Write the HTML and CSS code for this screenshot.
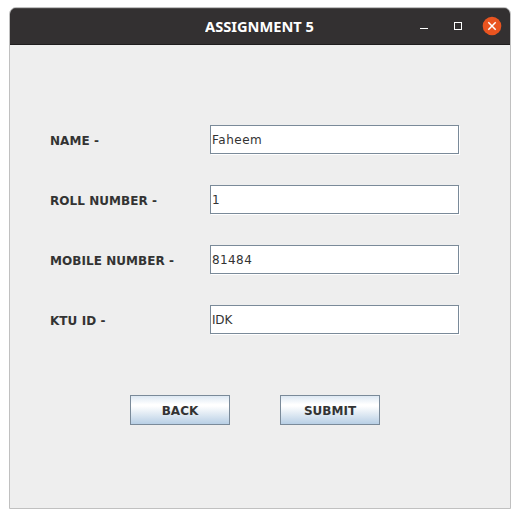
FILE: index.html
```html
<!DOCTYPE html>
<html lang="en">
<head>
<meta charset="utf-8">
<title>ASSIGNMENT 5</title>
<link rel="stylesheet" href="styles.css">
</head>
<body>
<main class="window">
  <header class="titlebar">
    <h1 class="title"><svg class="title-art" width="110" height="20"><text x="0" y="15" textLength="109" lengthAdjust="spacingAndGlyphs">ASSIGNMENT 5</text></svg></h1>
    <div class="controls">
      <svg width="90" height="36" viewBox="0 0 90 36">
        <path d="M0 20.5h8" stroke="#fff"/>
        <rect x="34.5" y="14.5" width="7" height="7" fill="none" stroke="#fff"/>
        <circle cx="72" cy="18" r="9.3" fill="#e95420"/>
        <path d="M68.3 14.3l7.4 7.4M75.7 14.3l-7.4 7.4" stroke="#fff" stroke-width="1.5"/>
      </svg>
    </div>
  </header>
  <form class="form">
    <label class="row"><span class="label">NAME -</span><input class="field" type="text" value="Faheem"></label>
    <label class="row"><span class="label">ROLL NUMBER -</span><input class="field" type="text" value="1"></label>
    <label class="row"><span class="label">MOBILE NUMBER -</span><input class="field number" type="text" value="81484"></label>
    <label class="row"><span class="label">KTU ID -</span><input class="field code" type="text" value="IDK"></label>
    <div class="actions">
      <button class="button" type="button">BACK</button>
      <button class="button" type="button">SUBMIT</button>
    </div>
  </form>
</main>
</body>
</html>
```
FILE: styles.css
```css
* { box-sizing: border-box; }
body {
  margin: 0;
  padding: 7px 9px;
  background: #fff;
  font-family: "DejaVu Sans", sans-serif;
  color: #333;
}
.window {
  width: 502px;
  height: 502px;
  border: 1px solid #c0c0c0;
  border-radius: 7px 7px 0 0;
  background: #eee;
  overflow: hidden;
}
.titlebar {
  display: grid;
  grid-template-columns: 195px 1fr 90px;
  height: 37px;
  background: #333031;
  border-top: 1px solid #4b4849;
  border-bottom: 1px solid #1f1d1e;
}
.title {
  grid-column: 2;
  margin: 0;
  padding-top: 8px;
  line-height: 0;
}
.title-art {
  fill: #fff;
  font: bold 14px "Noto Sans", sans-serif;
}
.controls { height: 36px; margin-top: -1px; }
.controls svg { display: block; }
.form {
  display: flex;
  flex-direction: column;
  gap: 30px;
  padding: 80px 50px 0 40px;
}
.row {
  display: grid;
  grid-template-columns: 160px 250px;
  height: 30px;
}
.label {
  font-size: 12px;
  font-weight: bold;
  letter-spacing: 0.06px;
  line-height: 32px;
  height: 30px;
  white-space: nowrap;
}
.field {
  width: 249px;
  height: 29px;
  padding: 0 1px;
  border: 1px solid #7a8a99;
  border-radius: 0;
  outline: none;
  background: #fff;
  box-shadow: 1px 1px 0 #fff;
  color: #333;
  font: 12px "DejaVu Sans", sans-serif;
  letter-spacing: 0.5px;
}
.number { letter-spacing: 0.4px; }
.code { letter-spacing: -0.2px; }
.actions {
  display: flex;
  gap: 50px;
  padding: 30px 0 0 80px;
}
.button {
  width: 100px;
  height: 30px;
  padding: 2px 0 0;
  border: 1px solid #7a8a99;
  border-radius: 0;
  background: linear-gradient(#dde8f3 0%, #fff 30%, #fff 36%, #b8cfe5 100%);
  color: #333;
  font: bold 12px "DejaVu Sans", sans-serif;
}
```
